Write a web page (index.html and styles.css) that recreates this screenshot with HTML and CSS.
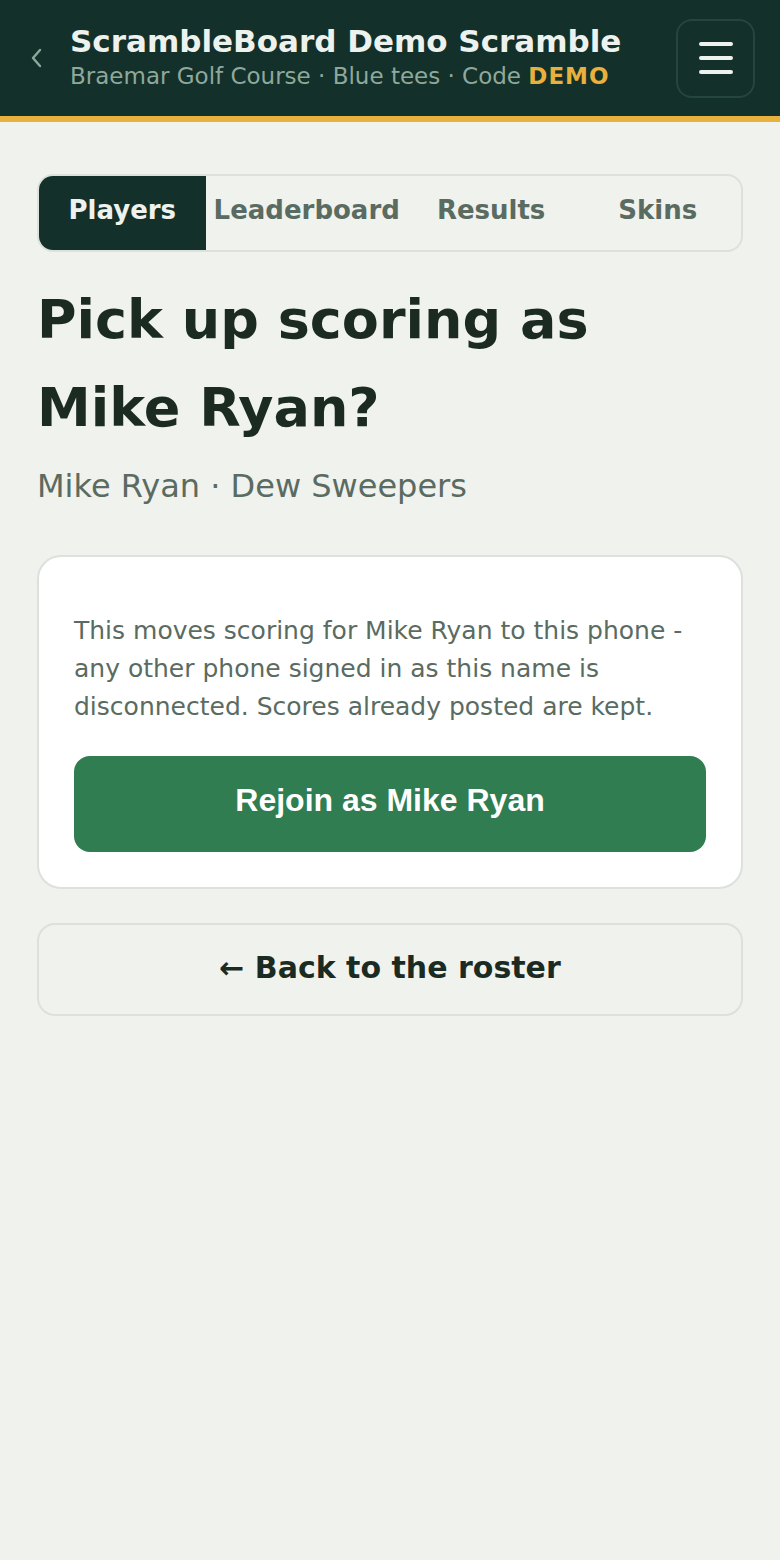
FILE: index.html
```html
<!DOCTYPE html>
<html lang="en">
<head>
<meta charset="UTF-8">
<meta name="viewport" content="width=device-width, initial-scale=1.0">
<title>Rejoin - ScrambleBoard</title>
<link rel="stylesheet" href="styles.css">
</head>
<body>
<div class="header">
  <a class="back" href="#">
    <svg width="14" height="22" viewBox="0 0 14 22"><polyline points="10,3 3,11 10,19" fill="none" stroke="#8fa89c" stroke-width="2.4" stroke-linecap="round" stroke-linejoin="round"/></svg>
  </a>
  <div class="event">
    <h1>ScrambleBoard Demo Scramble</h1>
    <div class="event-sub">Braemar Golf Course · Blue tees · Code <span class="code">DEMO</span></div>
  </div>
  <button class="menu-btn" aria-label="Menu">
    <span></span><span></span><span></span>
  </button>
</div>

<div class="main">
  <nav class="tabs">
    <button class="tab active">Players</button>
    <button class="tab">Leaderboard</button>
    <button class="tab">Results</button>
    <button class="tab">Skins</button>
  </nav>

  <h2>Pick up scoring as Mike Ryan?</h2>
  <p class="who">Mike Ryan · Dew Sweepers</p>

  <div class="card">
    <p class="note">This moves scoring for Mike Ryan to this phone - any other phone signed in as this name is disconnected. Scores already posted are kept.</p>
    <button class="rejoin-btn">Rejoin as Mike Ryan</button>
  </div>

  <button class="roster-btn">← Back to the roster</button>
</div>
</body>
</html>
```

FILE: styles.css
```css
body {
  font-family: "DejaVu Sans", sans-serif;
  background-color: #f0f2ee;
  margin: 0;
  padding: 0;
  color: #1c2b22;
}

.header {
  background-color: #13302a;
  border-bottom: 6px solid #e8b03c;
  height: 116px;
  display: flex;
  align-items: center;
  padding: 0 25px 0 30px;
}

.back {
  display: flex;
  width: 40px;
}

.event {
  flex: 1;
}

.event h1 {
  margin: 0;
  font-size: 31px;
  line-height: 36px;
  color: #eef2ee;
}

.event-sub {
  font-size: 23px;
  line-height: 34px;
  color: #8fa89c;
}

.code {
  color: #e8b03c;
  font-weight: bold;
  letter-spacing: 1px;
}

.menu-btn {
  width: 79px;
  height: 79px;
  background: transparent;
  border: 2px solid #25463c;
  border-radius: 16px;
  display: flex;
  flex-direction: column;
  align-items: center;
  justify-content: center;
  gap: 10px;
  padding: 0;
}

.menu-btn span {
  display: block;
  width: 34px;
  height: 4px;
  border-radius: 2px;
  background: #eef2ee;
}

.main {
  padding: 52px 37px 0;
}

.tabs {
  display: flex;
  border: 2px solid #dce1db;
  border-radius: 16px;
  overflow: hidden;
  height: 74px;
}

.tab {
  flex: 1;
  background: transparent;
  border: none;
  padding: 0 8px 6px;
  font-family: "DejaVu Sans", sans-serif;
  font-weight: bold;
  font-size: 26px;
  color: #5a6b61;
  white-space: nowrap;
}

.tab.active {
  background: #13302a;
  color: #eef2ee;
}

h2 {
  margin: 24px 0 0;
  font-size: 54px;
  line-height: 88px;
}

.who {
  margin: 11px 0 0;
  font-size: 32px;
  line-height: 47px;
  color: #5a6b61;
}

.card {
  margin-top: 45px;
  background: #fff;
  border: 2px solid #dce1db;
  border-radius: 24px;
  padding: 55px 35px 35px;
}

.note {
  margin: 0;
  font-size: 25px;
  line-height: 38px;
  color: #5a6b61;
}

.rejoin-btn {
  display: block;
  width: 100%;
  height: 96px;
  margin-top: 30px;
  padding: 0 0 8px;
  background: #2f7d50;
  color: #fff;
  border: none;
  border-radius: 16px;
  font-family: "Liberation Sans", Arial, sans-serif;
  font-weight: bold;
  font-size: 32px;
}

.roster-btn {
  display: block;
  width: 100%;
  height: 93px;
  margin-top: 34px;
  padding: 0 0 4px;
  background: transparent;
  border: 2px solid #dce1db;
  border-radius: 18px;
  font-family: "DejaVu Sans", sans-serif;
  font-weight: bold;
  font-size: 30px;
  color: #1c2b22;
}
```
